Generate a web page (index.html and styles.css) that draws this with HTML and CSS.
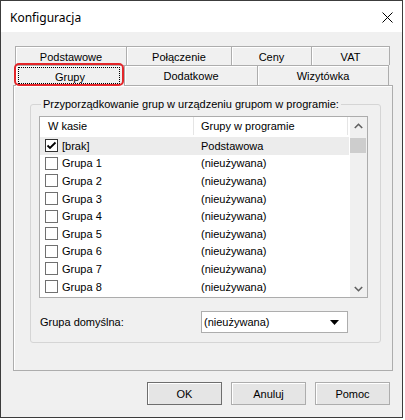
FILE: index.html
```html
<!DOCTYPE html>
<html lang="pl">
<head>
<meta charset="utf-8">
<title>Konfiguracja</title>
<link rel="stylesheet" href="styles.css">
</head>
<body>
<div class="window">
  <div class="titlebar">
    <span class="title">Konfiguracja</span>
    <svg class="close" width="11" height="11" viewBox="0 0 11 11"><path d="M0.5 0.5 L10.5 10.5 M10.5 0.5 L0.5 10.5" stroke="#000" stroke-width="1" fill="none"/></svg>
  </div>
  <div class="content">
    <div class="tabctl">
      <div class="tabrow back">
        <div class="tab t-pod">Podstawowe</div>
        <div class="tab t-pol">Połączenie</div>
        <div class="tab t-ceny">Ceny</div>
        <div class="tab t-vat last">VAT</div>
      </div>
      <div class="tabrow front">
        <div class="tab t-gru sel">Grupy<span class="focus"></span></div>
        <div class="tab t-dod">Dodatkowe</div>
        <div class="tab t-wiz last">Wizytówka</div>
      </div>
      <div class="mark"></div>
      <div class="panel">
        <fieldset class="group">
          <legend>Przyporządkowanie grup w urządzeniu grupom w programie:</legend>
          <div class="list">
            <div class="list-main">
              <div class="list-head">
                <div class="hcol c1">W kasie</div>
                <div class="hcol c2">Grupy w programie</div>
              </div>
              <div class="rows">
                <div class="row sel"><div class="cell c1"><span class="cb on"><svg width="11" height="11" viewBox="0 0 11 11"><path d="M1.5 5.5 L4 8 L9.5 2.5" stroke="#000" stroke-width="1.8" fill="none"/></svg></span>[brak]</div><div class="cell c2">Podstawowa</div></div>
                <div class="row"><div class="cell c1"><span class="cb"></span>Grupa 1</div><div class="cell c2">(nieużywana)</div></div>
                <div class="row"><div class="cell c1"><span class="cb"></span>Grupa 2</div><div class="cell c2">(nieużywana)</div></div>
                <div class="row"><div class="cell c1"><span class="cb"></span>Grupa 3</div><div class="cell c2">(nieużywana)</div></div>
                <div class="row"><div class="cell c1"><span class="cb"></span>Grupa 4</div><div class="cell c2">(nieużywana)</div></div>
                <div class="row"><div class="cell c1"><span class="cb"></span>Grupa 5</div><div class="cell c2">(nieużywana)</div></div>
                <div class="row"><div class="cell c1"><span class="cb"></span>Grupa 6</div><div class="cell c2">(nieużywana)</div></div>
                <div class="row"><div class="cell c1"><span class="cb"></span>Grupa 7</div><div class="cell c2">(nieużywana)</div></div>
                <div class="row"><div class="cell c1"><span class="cb"></span>Grupa 8</div><div class="cell c2">(nieużywana)</div></div>
              </div>
            </div>
            <div class="vscroll">
              <div class="sb-btn"><svg width="9" height="6" viewBox="0 0 9 6"><path d="M0.8 5 L4.5 1.3 L8.2 5" stroke="#606060" stroke-width="1.6" fill="none"/></svg></div>
              <div class="sb-track"><div class="thumb"></div></div>
              <div class="sb-btn"><svg width="9" height="6" viewBox="0 0 9 6"><path d="M0.8 1 L4.5 4.7 L8.2 1" stroke="#606060" stroke-width="1.6" fill="none"/></svg></div>
            </div>
          </div>
          <div class="default-row">
            <span class="lbl">Grupa domyślna:</span>
            <div class="combo"><span>(nieużywana)</span><svg width="9" height="5" viewBox="0 0 9 5"><path d="M0 0 L9 0 L4.5 5 Z" fill="#000"/></svg></div>
          </div>
        </fieldset>
      </div>
    </div>
    <div class="buttons">
      <div class="btn default">OK</div>
      <div class="btn">Anuluj</div>
      <div class="btn">Pomoc</div>
    </div>
  </div>
</div>
</body>
</html>
```
FILE: styles.css
```css
* { box-sizing: border-box; }
html, body { margin: 0; padding: 0; background: #fff; }
body {
  font-family: "Liberation Sans", Arial, sans-serif;
  font-size: 11px;
  color: #000;
}
.window {
  width: 403px;
  height: 418px;
  border: 1px solid #3c3c3c;
  background: #f0f0f0;
  display: flex;
  flex-direction: column;
}
.titlebar {
  height: 31px;
  flex: none;
  background: #fff;
  display: flex;
  align-items: center;
  justify-content: space-between;
  padding: 1px 9px 0 9px;
}
.title {
  font-family: "Noto Sans", sans-serif;
  font-size: 12px;
}
.close { display: block; }
.content {
  flex: 1;
  padding: 14px 9px 0 12px;
  display: flex;
  flex-direction: column;
}
.tabctl {
  position: relative;
  width: 380px;
}
.tabrow {
  display: flex;
  padding-left: 2px;
}
.tabrow.back { height: 19px; }
.tabrow.front { height: 20px; }
.tab {
  position: relative;
  display: flex;
  align-items: center;
  justify-content: center;
  border-left: 1px solid #adadad;
  border-top: 1px solid #adadad;
  box-shadow: inset 1px 1px 0 #fff;
  background: #f0f0f0;
  padding-top: 1px;
}
.tab.last { border-right: 1px solid #adadad; }
.t-pod { width: 111px; }
.t-pol { width: 105px; }
.t-ceny { width: 80px; }
.t-vat { width: 79px; }
.t-gru { width: 110px; }
.t-dod { width: 133px; }
.t-wiz { width: 132px; }
.tab.sel {
  border-right: 1px solid #adadad;
  margin-right: -1px;
  margin-bottom: -1px;
  height: 21px;
  z-index: 1;
}
.focus {
  position: absolute;
  left: 2px;
  top: 1px;
  width: 102px;
  height: 17px;
  border: 1px dotted #000;
}
.mark {
  position: absolute;
  left: 1px;
  top: 17px;
  width: 110px;
  height: 23px;
  border: 2px solid #e3262a;
  border-radius: 5px;
  z-index: 2;
}
.panel {
  height: 286px;
  border: 1px solid #adadad;
  box-shadow: inset 1px 1px 0 #fff;
  padding: 12px 11px 0 16px;
}
.group {
  margin: 0;
  border: 1px solid #d5d5d5;
  border-radius: 3px;
  padding: 5px 8px 9px 8px;
  min-width: 0;
}
.group legend {
  padding: 0 2px;
  margin-left: 2px;
  line-height: 13px;
}
.list {
  width: 329px;
  height: 182px;
  border: 1px solid #acacac;
  background: #fff;
  display: grid;
  grid-template-columns: 310px 17px;
  overflow: hidden;
}
.list-main { overflow: hidden; }
.list-head {
  display: flex;
  height: 18px;
}
.hcol {
  display: flex;
  align-items: center;
  width: 154px;
  border-right: 1px solid #e5e5e5;
}
.hcol.c1 { padding-left: 8px; }
.hcol.c2 { padding-left: 7px; }
.rows { padding-top: 2px; }
.row {
  display: flex;
  height: 17.6px;
  width: 309px;
}
.row.sel { background: #ececec; }
.cell {
  display: flex;
  align-items: center;
  width: 154px;
}
.cell.c1 { padding-left: 5px; }
.cell.c2 { padding-left: 7px; }
.cb {
  width: 13px;
  height: 13px;
  border: 1px solid #707070;
  background: #fff;
  margin-right: 4px;
  display: flex;
  align-items: center;
  justify-content: center;
}
.cb.on { border-color: #333; }
.cb svg { display: block; }
.vscroll {
  background: #f0f0f0;
  display: flex;
  flex-direction: column;
}
.sb-btn {
  height: 17px;
  display: flex;
  align-items: center;
  justify-content: center;
}
.sb-btn svg { display: block; }
.sb-track { flex: 1; }
.thumb {
  margin: 4px 1px 0 0;
  height: 15px;
  background: #cdcdcd;
}
.default-row {
  display: flex;
  align-items: center;
  margin-top: 13px;
}
.lbl {
  width: 162px;
  padding-left: 1px;
}
.combo {
  width: 147px;
  height: 22px;
  border: 1px solid #adadad;
  background: #fff;
  display: flex;
  align-items: center;
  justify-content: space-between;
  padding: 0 8px 0 2px;
}
.combo svg { display: block; }
.buttons {
  display: flex;
  justify-content: flex-end;
  gap: 9px;
  margin-top: 11px;
  padding-right: 3px;
}
.btn {
  width: 75px;
  height: 23px;
  border: 1px solid #adadad;
  background: #e5e5e5;
  display: flex;
  align-items: center;
  justify-content: center;
  box-shadow: inset 1px 1px 0 #fff;
}
.btn.default {
  border-color: #6e6e6e;
}
```
